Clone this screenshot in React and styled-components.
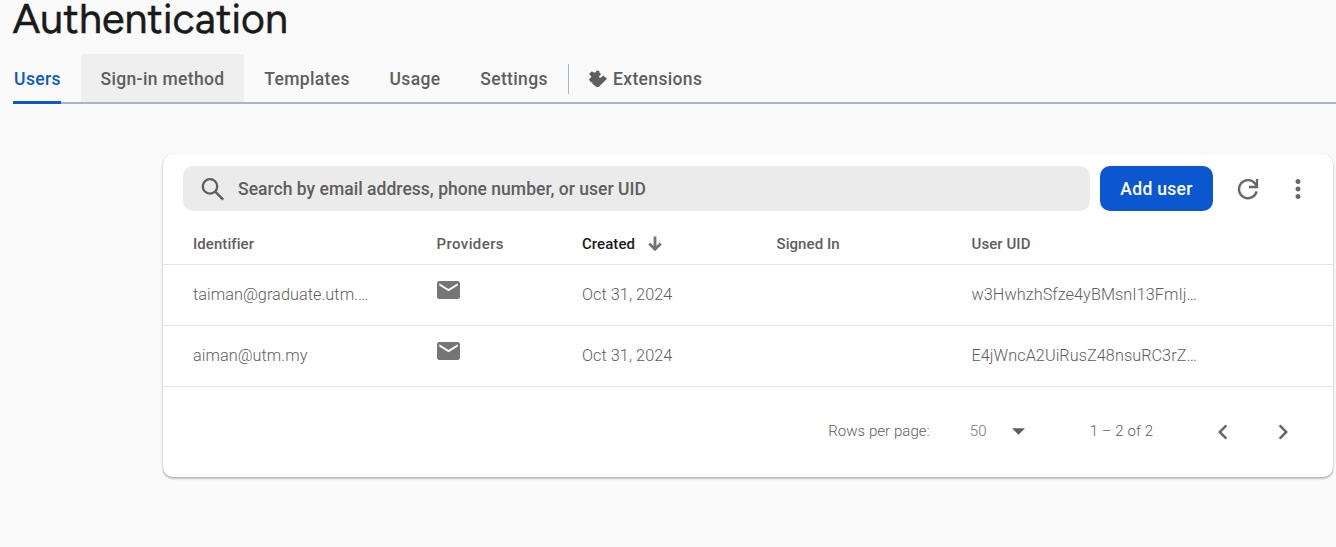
import React from 'react';
import styled, { createGlobalStyle } from 'styled-components';

const GlobalStyle = createGlobalStyle`
  * { box-sizing: border-box; }
  body {
    margin: 0;
    background: #fafafa;
    font-family: Roboto, "Liberation Sans", sans-serif;
    color: #5e5e5e;
    overflow: hidden;
  }
`;

const Page = styled.main`
  height: 547px;
  display: flex;
  flex-direction: column;
`;

const Title = styled.h1`
  margin: 0;
  height: 54px;
  padding-left: 12.5px;
  font: 400 41px/37px Figtree, Lato, sans-serif;
  letter-spacing: 0.1px;
  color: #1a1a1a;
  -webkit-text-stroke: 0.5px #1a1a1a;
  white-space: nowrap;
`;

const Tabs = styled.nav`
  margin-left: 13px;
  height: 50px;
  display: flex;
  border-bottom: 2px solid #a9b4c4;
`;

const Tab = styled.a`
  height: 48px;
  width: ${(p) => p.$width}px;
  display: flex;
  align-items: center;
  justify-content: ${(p) => (p.$icon ? 'flex-start' : 'center')};
  gap: 5px;
  font-size: 17.5px;
  font-weight: 480;
  letter-spacing: 0.35px;
  white-space: nowrap;
  padding: 2px ${(p) => (p.$active ? 0 : 20)}px 0;
  margin-right: ${(p) => (p.$active ? 20 : 0)}px;
  color: ${(p) => (p.$active ? '#0b57d0' : '#5e5e5e')};
  background: ${(p) => (p.$hovered ? '#efefef' : 'transparent')};
  ${(p) => p.$active && `
    height: 50px;
    padding: 3px 0 0 1px;
    border-bottom: 3px solid #0b57d0;
    border-radius: 2px 2px 0 0;
  `}
`;

const TabDivider = styled.span`
  width: 1px;
  height: 30px;
  margin-top: 10px;
  background: #a9b4c4;
`;

const Card = styled.section`
  margin: 50px 3px 0 163px;
  height: 323px;
  display: flex;
  flex-direction: column;
  background: #fff;
  border-radius: 10px;
  box-shadow: 0 2px 2px rgba(0, 0, 0, 0.14), 0 1px 3px rgba(0, 0, 0, 0.22);
`;

const Toolbar = styled.div`
  display: flex;
  height: 70px;
  padding: 12px 10px 13px 20px;
`;

const SearchBox = styled.div`
  flex: 1;
  display: flex;
  align-items: center;
  gap: 10px;
  padding-left: 15px;
  border-radius: 10px;
  background: #ebebeb;
  font-size: 17.5px;
  font-weight: 480;
  letter-spacing: 0.03px;
  color: #5e5e5e;
  white-space: nowrap;
`;

const AddButton = styled.button`
  width: 113px;
  height: 45px;
  margin: 0 10px;
  padding: 0;
  border: 0;
  border-radius: 10px;
  background: #0b57d0;
  color: #fff;
  font: 500 17.5px Roboto, sans-serif;
  letter-spacing: 0.3px;
`;

const IconButton = styled.button`
  width: 50px;
  height: 45px;
  padding: 0;
  border: 0;
  background: none;
  display: grid;
  place-items: center;
  color: #666;
`;

const Icon = styled.svg`
  display: block;
  flex: none;
  fill: currentColor;
`;

const LineIcon = styled(Icon)`
  fill: none;
  stroke: currentColor;
  stroke-width: 2.3;
`;

const Row = styled.div`
  display: grid;
  grid-template-columns: 243.5px 145.5px 194.5px 195px 1fr;
  align-items: center;
  height: ${(p) => (p.$head ? 41 : 61)}px;
  padding: 0 30px ${(p) => (p.$head ? 0 : 2)}px;
  border-bottom: 1px solid #e3e5e9;
  font-size: ${(p) => (p.$head ? 15 : 16.25)}px;
  font-weight: ${(p) => (p.$head ? 470 : 345)};
  letter-spacing: ${(p) => (p.$head ? 0.07 : 0.05)}px;
`;

const Cell = styled.div`
  display: flex;
  align-items: center;
  gap: 12px;
  white-space: nowrap;
  letter-spacing: ${(p) => (p.$spacing === undefined ? 'inherit' : `${p.$spacing}px`)};
  color: ${(p) => (p.$sorted ? '#1a1a1a' : '#5e5e5e')};
`;

const MailCell = styled(Cell)`
  padding-bottom: 9px;
  color: #757575;
`;

const Pager = styled.footer`
  display: flex;
  align-items: center;
  justify-content: flex-end;
  height: 88px;
  padding-right: 21px;
  font-size: 15px;
  font-weight: 345;
  letter-spacing: 0.05px;
  white-space: nowrap;
`;

const PageSize = styled.div`
  display: flex;
  align-items: center;
  justify-content: space-between;
  width: 55px;
  margin: 0 65px 0 40px;
  color: #757575;
`;

const PageButton = styled(IconButton)`
  width: 60px;
  padding-top: 2px;
  &:first-of-type { margin-left: 40px; }
  &:last-of-type { margin-right: -1px; }
`;

const Glyph = ({ size = 30, d }) => (
  <Icon width={size} height={size} viewBox="0 0 24 24"><path d={d} /></Icon>
);

const icons = {
  more: 'M12 8c1.1 0 2-.9 2-2s-.9-2-2-2-2 .9-2 2 .9 2 2 2zm0 2c-1.1 0-2 .9-2 2s.9 2 2 2 2-.9 2-2-.9-2-2-2zm0 6c-1.1 0-2 .9-2 2s.9 2 2 2 2-.9 2-2-.9-2-2-2z',
  mail: 'M20 4H4c-1.1 0-1.99.9-1.99 2L2 18c0 1.1.9 2 2 2h16c1.1 0 2-.9 2-2V6c0-1.1-.9-2-2-2zm0 4l-8 5-8-5V6l8 5 8-5v2z',
  left: 'M15.41 7.41L14 6l-6 6 6 6 1.41-1.41L10.83 12z',
  right: 'M10 6L8.59 7.41 13.17 12l-4.58 4.59L10 18l6-6z',
};

const users = [
  { id: 'taiman@graduate.utm.…', created: 'Oct 31, 2024', uid: 'w3HwhzhSfze4yBMsnI13FmIj…' },
  { id: 'aiman@utm.my', created: 'Oct 31, 2024', uid: 'E4jWncA2UiRusZ48nsuRC3rZ…' },
];

export default function App() {
  return (
    <Page>
      <GlobalStyle />
      <Title>Authentication</Title>
      <Tabs>
        <Tab $active $width={48}>Users</Tab>
        <Tab $hovered $width={163}>Sign-in method</Tab>
        <Tab $width={126}>Templates</Tab>
        <Tab $width={90}>Usage</Tab>
        <Tab $width={108}>Settings</Tab>
        <TabDivider />
        <Tab $icon $width={153}>
          <Icon width="19" height="18" viewBox="0.5 0 19 18">
            <path d="M1 3.2L3.4 1.4Q4.4 1.5 5.2 2.6L7 2.4L7.6 1Q9.2 -.2 10.8 1L11 2.8L12.7 4.3L11.3 5.6Q10.2 6.4 10.9 7.4Q11.8 8.2 12.8 7.3L14.7 5.4L18.5 8.8L10.2 17H8L3.8 13.8V12.3H2.3L.5 9.4L2.5 7.2Q3 6.5 2.2 5.6L1 5Z" />
          </Icon>
          Extensions
        </Tab>
      </Tabs>
      <Card>
        <Toolbar>
          <SearchBox>
            <LineIcon width="30" height="30" viewBox="0 0 30 30">
              <circle cx="12" cy="12.4" r="7.2" />
              <path d="M17 17.4L25.2 25.6" strokeWidth="2.6" />
            </LineIcon>
            Search by email address, phone number, or user UID
          </SearchBox>
          <AddButton>Add user</AddButton>
          <IconButton aria-label="Refresh">
            <LineIcon width="30" height="30" viewBox="0 0 30 30">
              <path d="M23.7 17.4A9 9 0 1 1 22.2 9.8L23.5 12.1M24 5V13H16" />
            </LineIcon>
          </IconButton>
          <IconButton aria-label="More"><Glyph d={icons.more} /></IconButton>
        </Toolbar>
        <Row $head>
          <Cell>Identifier</Cell>
          <Cell $spacing={0.4}>Providers</Cell>
          <Cell $sorted>
            Created
            <Icon width="16" height="16" viewBox="0 0 16 16" color="#757575">
              <path d="M6.6 .5h2.8v9.4l3.4-3.4 2 2L8 15.3 1.2 8.5l2-2 3.4 3.4z" />
            </Icon>
          </Cell>
          <Cell>Signed In</Cell>
          <Cell>User UID</Cell>
        </Row>
        {users.map((u) => (
          <Row key={u.uid}>
            <Cell>{u.id}</Cell>
            <MailCell>
              <Icon width="23" height="18" viewBox="2 4 20 16" preserveAspectRatio="none"><path d={icons.mail} /></Icon>
            </MailCell>
            <Cell>{u.created}</Cell>
            <Cell />
            <Cell>{u.uid}</Cell>
          </Row>
        ))}
        <Pager>
          <span>Rows per page:</span>
          <PageSize>
            50
            <Icon width="13" height="7" viewBox="0 0 13 7" color="#5e5e5e"><path d="M0 .3h13l-6.5 6.4z" /></Icon>
          </PageSize>
          <span>1 – 2 of 2</span>
          <PageButton aria-label="Previous page"><Glyph d={icons.left} /></PageButton>
          <PageButton aria-label="Next page"><Glyph d={icons.right} /></PageButton>
        </Pager>
      </Card>
    </Page>
  );
}
